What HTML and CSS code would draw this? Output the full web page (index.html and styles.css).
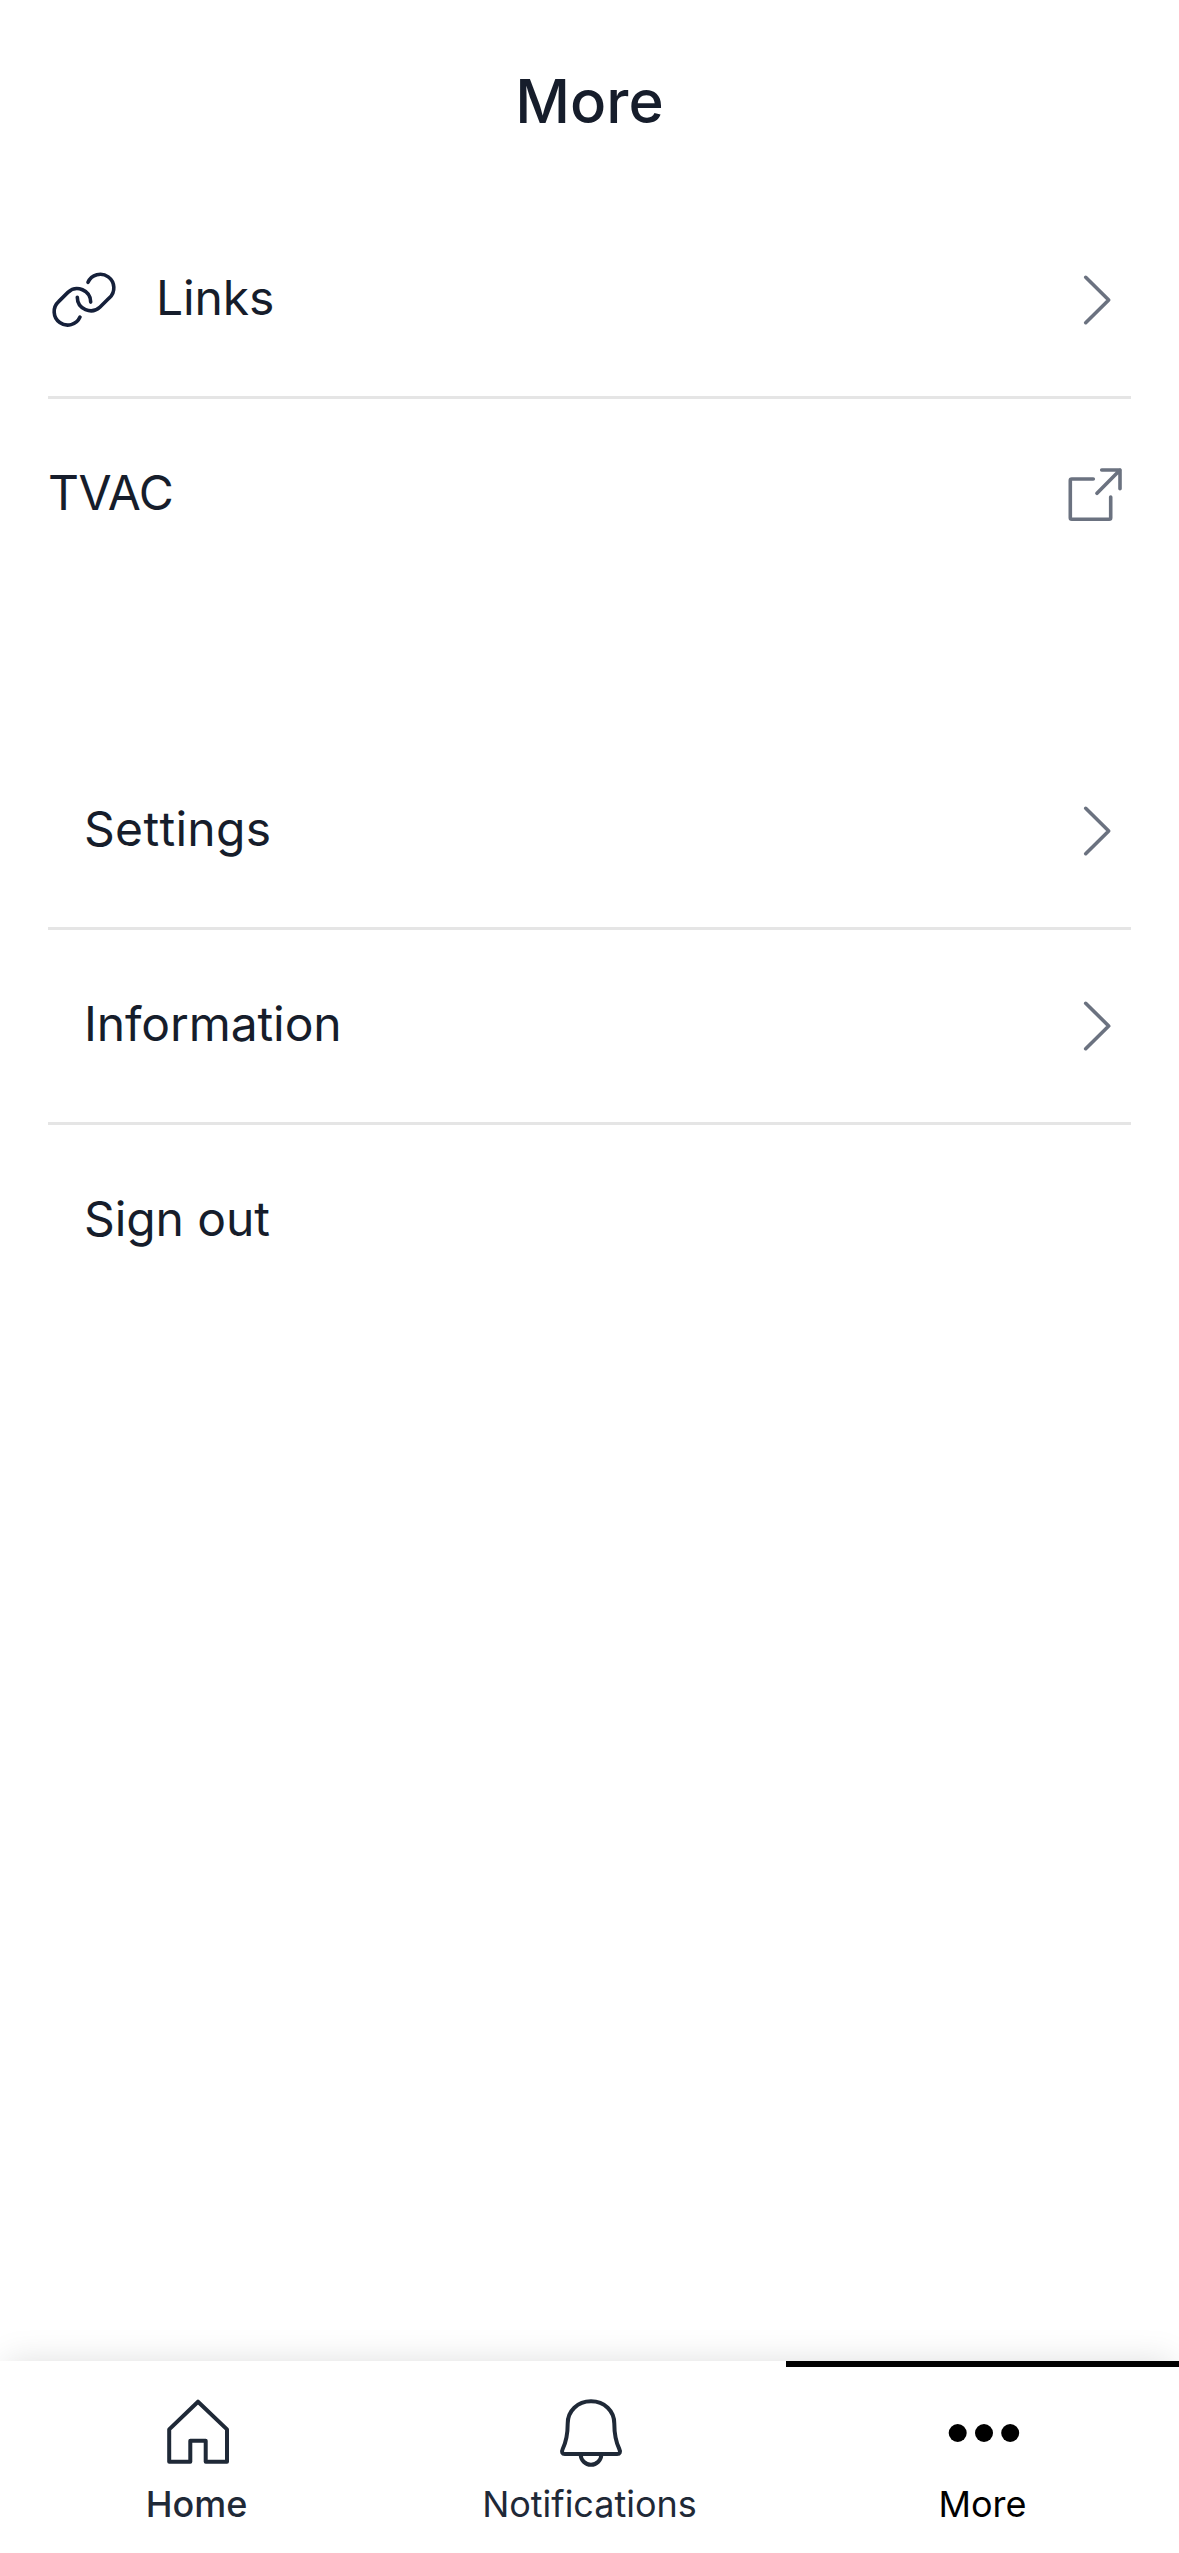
FILE: index.html
```html
<!DOCTYPE html>
<html lang="en">
<head>
<meta charset="utf-8">
<title>More</title>
<link rel="stylesheet" href="styles.css">
</head>
<body>
<div class="screen">
  <header class="header"><h1 class="title">More</h1></header>
  <main class="content">
    <ul class="menu">
      <li class="row">
        <svg class="icon icon-link" viewBox="0 0 72 72"><path d="M40 18.3A13.5 13.5 0 1 1 61.4 33.8L52.1 43A13.5 13.5 0 0 1 29.3 33.3"/><path d="M32 53.1A13.5 13.5 0 1 1 10.6 37.6L19.9 28.4A13.5 13.5 0 0 1 42.7 38.1"/></svg>
        <span class="label label-after-icon">Links</span>
        <svg class="icon icon-action" viewBox="0 0 72 72"><path d="M26.7 13.3L49.7 36L26.7 58.7"/></svg>
      </li>
      <li class="row">
        <span class="label label-caps">TVAC</span>
        <svg class="icon icon-action" viewBox="0 0 72 72"><path d="M34.3 20H12.8Q11.3 20 11.3 21.5V58.8Q11.3 60.3 12.8 60.3H50.2Q51.7 60.3 51.7 58.8V38M42.7 11H61V29.7M38 34.3L61 11"/></svg>
      </li>
    </ul>
    <ul class="menu menu-inset">
      <li class="row">
        <span class="label label-unkerned">Settings</span>
        <svg class="icon icon-action" viewBox="0 0 72 72"><path d="M26.7 13.3L49.7 36L26.7 58.7"/></svg>
      </li>
      <li class="row">
        <span class="label">Information</span>
        <svg class="icon icon-action" viewBox="0 0 72 72"><path d="M26.7 13.3L49.7 36L26.7 58.7"/></svg>
      </li>
      <li class="row"><span class="label">Sign out</span></li>
    </ul>
  </main>
  <nav class="tabs">
    <a class="tab tab-strong">
      <svg class="icon tab-icon" viewBox="0 0 72 72"><path d="M36 4.7L7.2 32.4V64.8H28.3V43.7H43.7V64.8H65V32.4Z"/></svg>
      <span class="tab-label">Home</span>
    </a>
    <a class="tab">
      <svg class="icon tab-icon" viewBox="0 0 72 72"><path d="M36 4.3C22.5 4.3 12.7 14 12.7 26.5C12.7 37.5 11.3 44.5 7.7 52C6.2 55 7.3 57 9.8 57H62.2C64.7 57 65.8 55 64.3 52C60.7 44.5 59.3 37.5 59.3 26.5C59.3 14 49.5 4.3 36 4.3ZM25.7 57.5A10.3 10.3 0 0 0 46.3 57.5"/></svg>
      <span class="tab-label">Notifications</span>
    </a>
    <a class="tab tab-active">
      <svg class="icon tab-icon tab-dots" viewBox="0 0 72 72"><circle cx="9.7" cy="36" r="9"/><circle cx="36" cy="36" r="9"/><circle cx="62.2" cy="36" r="9"/></svg>
      <span class="tab-label">More</span>
    </a>
  </nav>
</div>
</body>
</html>
```

FILE: styles.css
```css
* {
  box-sizing: border-box;
}

body {
  margin: 0;
  background: #fff;
  color: #161d2b;
  font-family: Inter, sans-serif;
}

.screen {
  display: flex;
  flex-direction: column;
  height: 2553px;
  overflow: hidden;
}

.header {
  height: 204px;
  padding-top: 65px;
  text-align: center;
}

.title {
  margin: 0;
  font-size: 60px;
  font-weight: 500;
  line-height: 72px;
}

.content {
  flex: 1;
  padding: 0 48px;
}

.menu {
  margin: 0;
  padding: 0;
  list-style: none;
}

.menu-inset {
  margin-top: 144px;
}

.row {
  display: flex;
  align-items: center;
  height: 195px;
  border-bottom: 3px solid #e5e5e5;
}

.row:last-child {
  height: 192px;
  border-bottom: 0;
}

.label {
  padding-bottom: 5px;
  font-size: 48px;
  line-height: 60px;
  letter-spacing: -0.1px;
}

.label-caps {
  letter-spacing: -0.5px;
}

.label-unkerned {
  font-kerning: none;
  letter-spacing: 0.3px;
}

.label-after-icon {
  margin-left: 36px;
}

.menu-inset .label {
  margin-left: 36px;
}

.icon {
  flex: none;
  width: 72px;
  height: 72px;
  fill: none;
  stroke: currentColor;
  stroke-width: 3.6;
  stroke-linecap: round;
  stroke-linejoin: round;
}

.icon-link {
  color: #15203a;
}

.icon-action {
  margin-left: auto;
  color: #6b7280;
}

.tabs {
  display: grid;
  grid-template-columns: repeat(3, 1fr);
  height: 192px;
  background: #fff;
  box-shadow: 0 -6px 32px -6px rgba(0, 0, 0, 0.13);
}

.tab {
  display: flex;
  flex-direction: column;
  align-items: center;
  padding-top: 30px;
  border-top: 6px solid transparent;
  color: #1f2937;
}

.tab-active {
  border-top-color: #000;
  color: #000;
}

.tab-icon {
  margin-left: 3px;
  stroke-width: 4;
}

.tab-dots {
  fill: currentColor;
  stroke: none;
}

.tab-label {
  margin-top: 11px;
  font-size: 36px;
  line-height: 48px;
}

.tab-strong .tab-label {
  font-weight: 500;
}
```
